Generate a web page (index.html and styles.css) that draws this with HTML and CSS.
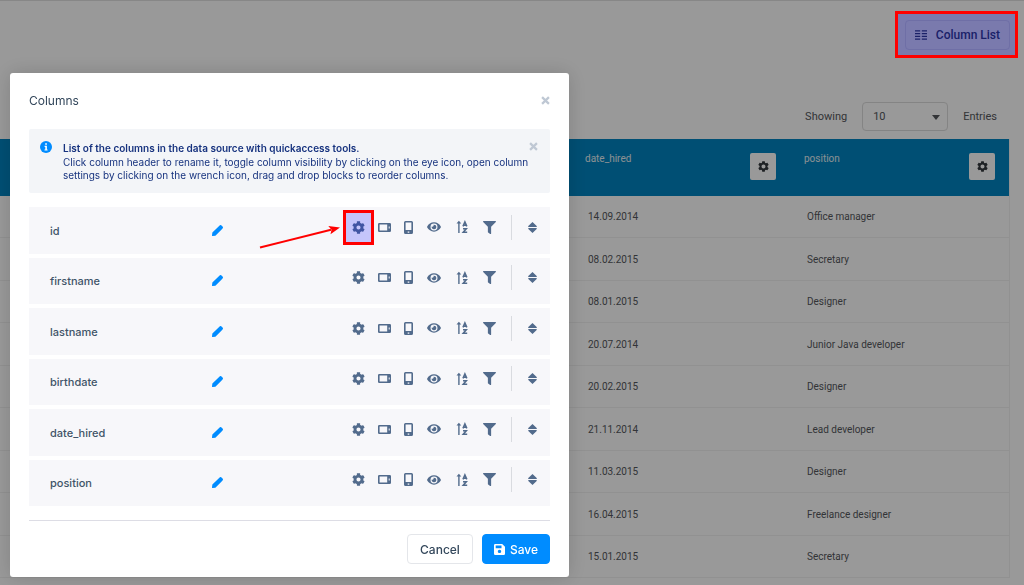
FILE: index.html
```html
<!DOCTYPE html>
<html lang="en">
<head>
<meta charset="utf-8">
<title>Columns</title>
<link rel="stylesheet" href="styles.css">
</head>
<body>
<svg class="sprite" aria-hidden="true">
  <symbol id="cog" viewBox="0 0 512 512"><path d="M487.4 315.7l-42.6-24.6c4.3-23.2 4.3-47 0-70.2l42.6-24.6c4.9-2.8 7.1-8.6 5.5-14-11.1-35.6-30-67.8-54.7-94.6-3.8-4.1-10-5.1-14.8-2.3L380.8 110c-17.9-15.4-38.5-27.3-60.8-35.1V25.8c0-5.6-3.9-10.5-9.4-11.7-36.7-8.2-74.3-7.8-109.2 0-5.5 1.2-9.4 6.1-9.4 11.7V75c-22.2 7.9-42.8 19.8-60.8 35.1L88.7 85.5c-4.9-2.8-11-1.9-14.8 2.3-24.7 26.7-43.6 58.9-54.7 94.6-1.7 5.4.6 11.2 5.5 14L67.3 221c-4.3 23.2-4.3 47 0 70.2l-42.6 24.6c-4.9 2.8-7.1 8.6-5.5 14 11.1 35.6 30 67.8 54.7 94.6 3.8 4.1 10 5.1 14.8 2.3l42.6-24.6c17.9 15.4 38.5 27.3 60.8 35.1v49.2c0 5.6 3.9 10.5 9.4 11.7 36.7 8.2 74.3 7.8 109.2 0 5.5-1.2 9.4-6.1 9.4-11.7v-49.2c22.2-7.9 42.8-19.8 60.8-35.1l42.6 24.6c4.9 2.8 11 1.9 14.8-2.3 24.7-26.7 43.6-58.9 54.7-94.6 1.5-5.5-.7-11.3-5.6-14.1zM256 336c-44.1 0-80-35.9-80-80s35.9-80 80-80 80 35.9 80 80-35.9 80-80 80z"/></symbol>
  <symbol id="settings" viewBox="2 2 20 20"><path d="M19.14 12.94c.04-.3.06-.61.06-.94 0-.32-.02-.64-.07-.94l2.03-1.58c.18-.14.23-.41.12-.61l-1.92-3.32c-.12-.22-.37-.29-.59-.22l-2.39.96c-.5-.38-1.03-.7-1.62-.94l-.36-2.54c-.04-.24-.24-.41-.48-.41h-3.84c-.24 0-.43.17-.47.41l-.36 2.54c-.59.24-1.13.57-1.62.94l-2.39-.96c-.22-.08-.47 0-.59.22L2.74 8.87c-.12.21-.08.47.12.61l2.03 1.58c-.05.3-.09.63-.09.94s.02.64.07.94l-2.03 1.58c-.18.14-.23.41-.12.61l1.92 3.32c.12.22.37.29.59.22l2.39-.96c.5.38 1.03.7 1.62.94l.36 2.54c.05.24.24.41.48.41h3.84c.24 0 .44-.17.47-.41l.36-2.54c.59-.24 1.13-.56 1.62-.94l2.39.96c.22.08.47 0 .59-.22l1.92-3.32c.12-.22.07-.47-.12-.61l-2.01-1.58zM12 15.6c-1.98 0-3.6-1.62-3.6-3.6s1.62-3.6 3.6-3.6 3.6 1.62 3.6 3.6-1.62 3.6-3.6 3.6z"/></symbol>
  <symbol id="tablet" viewBox="0 0 13 9"><path fill-rule="evenodd" d="M1.300 0h10.400A1.300 1.300 0 0 1 13 1.300v6.400A1.300 1.300 0 0 1 11.700 9H1.300A1.300 1.300 0 0 1 0 7.700V1.300A1.300 1.300 0 0 1 1.300 0zM1.600 1.600v5.800h7.600V1.600zM10.700 3.600v1.800h1V3.600z"/></symbol>
  <symbol id="phone" viewBox="0 0 9 13"><path fill-rule="evenodd" d="M1.500 0h6A1.500 1.500 0 0 1 9 1.500v10A1.500 1.500 0 0 1 7.500 13h-6A1.500 1.500 0 0 1 0 11.500v-10A1.500 1.500 0 0 1 1.500 0zM1.600 1.600v7.400h5.800V1.600zM3.700 10.600v1.100h1.600v-1.100z"/></symbol>
  <symbol id="eye" viewBox="0 50 576 412"><path d="M572.52 241.4C518.29 135.59 410.93 64 288 64S57.68 135.64 3.48 241.41a32.35 32.35 0 0 0 0 29.19C57.71 376.41 165.07 448 288 448s230.32-71.64 284.52-177.41a32.35 32.35 0 0 0 0-29.19zM288 400a144 144 0 1 1 144-144 143.93 143.93 0 0 1-144 144zm0-240a95.31 95.31 0 0 0-25.31 3.79 47.85 47.85 0 0 1-66.9 66.9A95.78 95.78 0 1 0 288 160z"/></symbol>
  <symbol id="order" viewBox="0 0 12 14"><path d="M2.200 13V3.500H.5L2.900.8l2.400 2.700H3.600V13z"/><path fill="none" stroke="currentColor" stroke-width="1.600" d="M7 6.400L8.900 2l1.900 4.400M7.700 5.200h2.400M7 8.800h3.300L7.300 12.200h3.900"/></symbol>
  <symbol id="filter" viewBox="0 0 512 512"><path d="M487.976 0H24.028C2.71 0-8.047 25.866 7.058 40.971L192 225.941V432c0 7.831 3.821 15.17 10.237 19.662l80 55.98C298.02 518.69 320 507.493 320 487.98V225.941l184.947-184.97C520.021 25.896 509.338 0 487.976 0z"/></symbol>
  <symbol id="move" viewBox="0 0 8 10"><path d="M4 0l3.800 3.600c.3.400.1.900-.4.900H.6c-.5 0-.7-.5-.4-.9zM4 10l3.800-3.600c.3-.4.1-.9-.4-.9H.6c-.5 0-.7.5-.4.9z"/></symbol>
  <symbol id="pencil" viewBox="0 0 12 12"><path d="M.6 12a.6.6 0 0 1-.6-.6l.4-3.100L7.200 1.500 8.300.5a1.500 1.500 0 0 1 2.100 0l1.100 1.100a1.500 1.500 0 0 1 0 2.100l-1 1.100-6.800 6.800z"/></symbol>
  <symbol id="close" viewBox="0 0 10 10"><path fill="none" stroke="currentColor" stroke-width="2.500" d="M1.200 1.200l7.600 7.600M8.800 1.200L1.200 8.800"/></symbol>
</svg>

<main class="page">
  <div class="toolbar">
    <div class="spot">
      <button class="column-list" type="button">
        <svg width="12" height="10" viewBox="0 0 12 10"><path fill="none" stroke="currentColor" stroke-width="1.200" d="M0 .8h5.200M0 3.600h5.200M0 6.400h5.200M0 9.200h5.200M6.800.8H12M6.800 3.600H12M6.800 6.400H12M6.800 9.200H12"/></svg>
        Column List
      </button>
      <span class="marker"></span>
    </div>
  </div>
  <div class="length">
    <label for="entries">Showing</label>
    <span class="select"><select id="entries"><option>10</option></select><svg width="8" height="5" viewBox="0 0 8 5"><path d="M0 0h8L4 5z"/></svg></span>
    <span>Entries</span>
  </div>
  <table class="data">
    <colgroup><col><col class="field"><col class="field"></colgroup>
    <thead>
      <tr>
        <td></td>
        <th><div class="head">date_hired<button type="button" aria-label="Settings"><svg class="i11"><use href="#settings"/></svg></button></div></th>
        <th><div class="head">position<button type="button" aria-label="Settings"><svg class="i11"><use href="#settings"/></svg></button></div></th>
      </tr>
    </thead>
    <tbody>
      <tr><td></td><td>14.09.2014</td><td>Office manager</td></tr>
      <tr><td></td><td>08.02.2015</td><td>Secretary</td></tr>
      <tr><td></td><td>08.01.2015</td><td>Designer</td></tr>
      <tr><td></td><td>20.07.2014</td><td>Junior Java developer</td></tr>
      <tr><td></td><td>20.02.2015</td><td>Designer</td></tr>
      <tr><td></td><td>21.11.2014</td><td>Lead developer</td></tr>
      <tr><td></td><td>11.03.2015</td><td>Designer</td></tr>
      <tr><td></td><td>16.04.2015</td><td>Freelance designer</td></tr>
      <tr><td></td><td>15.01.2015</td><td>Secretary</td></tr>
    </tbody>
  </table>
</main>

<div class="backdrop"></div>

<section class="modal" role="dialog" aria-labelledby="title">
  <header class="modal-head">
    <h1 id="title">Columns</h1>
    <button class="close" type="button" aria-label="Close"><svg class="i9"><use href="#close"/></svg></button>
  </header>
  <div class="notice">
    <svg class="info" width="12" height="12" viewBox="0 0 12 12"><circle cx="6" cy="6" r="6" fill="#008cff"/><path fill="#fff" d="M5.200 2.200h1.700v1.600H5.200zM4.600 4.800h2.300v3.600h.7v1.200H4.500V8.400h.8V6h-.7z"/></svg>
    <div class="notice-text">
      <strong>List of the columns in the data source with quickaccess tools.</strong>
      <p>Click column header to rename it, toggle column visibility by clicking on the eye icon, open column settings by clicking on the wrench icon, drag and drop blocks to reorder columns.</p>
    </div>
    <button class="close" type="button" aria-label="Dismiss"><svg class="i9"><use href="#close"/></svg></button>
  </div>
  <ul class="columns">
    <li>
      <span class="name">id</span><button class="edit" type="button" aria-label="Rename"><svg class="i11"><use href="#pencil"/></svg></button>
      <div class="tools"><button type="button" class="spot" aria-label="Settings"><svg class="i13"><use href="#cog"/></svg><span class="marker"></span></button><button type="button" aria-label="Tablet"><svg class="tab"><use href="#tablet"/></svg></button><button type="button" aria-label="Mobile"><svg class="mob"><use href="#phone"/></svg></button><button type="button" aria-label="Visibility"><svg class="see"><use href="#eye"/></svg></button><button type="button" aria-label="Sorting"><svg class="ord"><use href="#order"/></svg></button><button type="button" aria-label="Filter"><svg class="i13"><use href="#filter"/></svg></button><i class="rule"></i><button type="button" aria-label="Reorder"><svg class="mov"><use href="#move"/></svg></button></div>
      <svg class="arrow" width="84" height="26" viewBox="0 0 84 26"><path stroke="#f00" stroke-width="2" d="M1 22.500L72 4.800"/><path fill="#f00" d="M81 2.500L71.500 9.200l1-4.500-3.200-3.600z"/></svg>
    </li>
    <li>
      <span class="name">firstname</span><button class="edit" type="button" aria-label="Rename"><svg class="i11"><use href="#pencil"/></svg></button>
      <div class="tools"><button type="button" aria-label="Settings"><svg class="i13"><use href="#cog"/></svg></button><button type="button" aria-label="Tablet"><svg class="tab"><use href="#tablet"/></svg></button><button type="button" aria-label="Mobile"><svg class="mob"><use href="#phone"/></svg></button><button type="button" aria-label="Visibility"><svg class="see"><use href="#eye"/></svg></button><button type="button" aria-label="Sorting"><svg class="ord"><use href="#order"/></svg></button><button type="button" aria-label="Filter"><svg class="i13"><use href="#filter"/></svg></button><i class="rule"></i><button type="button" aria-label="Reorder"><svg class="mov"><use href="#move"/></svg></button></div>
    </li>
    <li>
      <span class="name">lastname</span><button class="edit" type="button" aria-label="Rename"><svg class="i11"><use href="#pencil"/></svg></button>
      <div class="tools"><button type="button" aria-label="Settings"><svg class="i13"><use href="#cog"/></svg></button><button type="button" aria-label="Tablet"><svg class="tab"><use href="#tablet"/></svg></button><button type="button" aria-label="Mobile"><svg class="mob"><use href="#phone"/></svg></button><button type="button" aria-label="Visibility"><svg class="see"><use href="#eye"/></svg></button><button type="button" aria-label="Sorting"><svg class="ord"><use href="#order"/></svg></button><button type="button" aria-label="Filter"><svg class="i13"><use href="#filter"/></svg></button><i class="rule"></i><button type="button" aria-label="Reorder"><svg class="mov"><use href="#move"/></svg></button></div>
    </li>
    <li>
      <span class="name">birthdate</span><button class="edit" type="button" aria-label="Rename"><svg class="i11"><use href="#pencil"/></svg></button>
      <div class="tools"><button type="button" aria-label="Settings"><svg class="i13"><use href="#cog"/></svg></button><button type="button" aria-label="Tablet"><svg class="tab"><use href="#tablet"/></svg></button><button type="button" aria-label="Mobile"><svg class="mob"><use href="#phone"/></svg></button><button type="button" aria-label="Visibility"><svg class="see"><use href="#eye"/></svg></button><button type="button" aria-label="Sorting"><svg class="ord"><use href="#order"/></svg></button><button type="button" aria-label="Filter"><svg class="i13"><use href="#filter"/></svg></button><i class="rule"></i><button type="button" aria-label="Reorder"><svg class="mov"><use href="#move"/></svg></button></div>
    </li>
    <li>
      <span class="name">date_hired</span><button class="edit" type="button" aria-label="Rename"><svg class="i11"><use href="#pencil"/></svg></button>
      <div class="tools"><button type="button" aria-label="Settings"><svg class="i13"><use href="#cog"/></svg></button><button type="button" aria-label="Tablet"><svg class="tab"><use href="#tablet"/></svg></button><button type="button" aria-label="Mobile"><svg class="mob"><use href="#phone"/></svg></button><button type="button" aria-label="Visibility"><svg class="see"><use href="#eye"/></svg></button><button type="button" aria-label="Sorting"><svg class="ord"><use href="#order"/></svg></button><button type="button" aria-label="Filter"><svg class="i13"><use href="#filter"/></svg></button><i class="rule"></i><button type="button" aria-label="Reorder"><svg class="mov"><use href="#move"/></svg></button></div>
    </li>
    <li>
      <span class="name">position</span><button class="edit" type="button" aria-label="Rename"><svg class="i11"><use href="#pencil"/></svg></button>
      <div class="tools"><button type="button" aria-label="Settings"><svg class="i13"><use href="#cog"/></svg></button><button type="button" aria-label="Tablet"><svg class="tab"><use href="#tablet"/></svg></button><button type="button" aria-label="Mobile"><svg class="mob"><use href="#phone"/></svg></button><button type="button" aria-label="Visibility"><svg class="see"><use href="#eye"/></svg></button><button type="button" aria-label="Sorting"><svg class="ord"><use href="#order"/></svg></button><button type="button" aria-label="Filter"><svg class="i13"><use href="#filter"/></svg></button><i class="rule"></i><button type="button" aria-label="Reorder"><svg class="mov"><use href="#move"/></svg></button></div>
    </li>
  </ul>
  <footer class="modal-foot">
    <button class="btn" type="button">Cancel</button>
    <button class="btn primary" type="button"><svg width="11" height="11" viewBox="0 0 11 11"><path fill="#fff" fill-rule="evenodd" d="M1.200 0h7L11 2.800v7A1.200 1.200 0 0 1 9.800 11H1.200A1.200 1.200 0 0 1 0 9.800V1.200A1.200 1.200 0 0 1 1.200 0zM1.700 1.600v2.600h5.800V1.600zM5.500 5.700a1.700 1.700 0 1 0 .01 0z"/></svg>Save</button>
  </footer>
</section>
</body>
</html>
```
FILE: styles.css
```css
* { box-sizing: border-box; }
body {
  margin: 0;
  background: #fff;
  color: #33475b;
  font-family: Inter, "Liberation Sans", sans-serif;
  font-size: 11px;
}
button { margin: 0; padding: 0; border: 0; background: none; color: inherit; font: inherit; }
svg { display: block; fill: currentColor; flex: none; }
.sprite { position: absolute; width: 0; height: 0; }
.i9 { width: 9px; height: 9px; }
.i11 { width: 11px; height: 11px; }
.i13 { width: 13px; height: 13px; }
.tab { width: 13px; height: 9px; }
.mob { width: 9px; height: 13px; }
.see { width: 14px; height: 10px; }
.ord { width: 12px; height: 14px; }
.mov { width: 9px; height: 11px; }

.page { border-top: 1px solid #e2e2e2; font-family: Roboto, sans-serif; color: #55585c; }
.toolbar { display: flex; justify-content: flex-end; padding: 19px 14px 0 0; }
.spot { position: relative; }
.marker {
  position: absolute;
  inset: -9px -8px -8px -10px;
  z-index: 3;
  border: 3px solid #f00;
  background: rgba(0, 0, 255, .2);
}
.column-list {
  display: flex;
  align-items: center;
  gap: 9px;
  height: 30px;
  padding: 0 9px;
  border: 1px solid #e8e8f0;
  border-radius: 4px;
  color: #3a4670;
  font-size: 12px;
  font-weight: 500;
}
.length { display: flex; justify-content: flex-end; align-items: center; gap: 15px; padding: 52px 27px 8px 0; }
.select { position: relative; }
.select select {
  display: block;
  appearance: none;
  width: 86px;
  height: 29px;
  padding: 0 10px;
  border: 1px solid #dcdcdc;
  border-radius: 4px;
  background: transparent;
  color: inherit;
  font: inherit;
}
.select svg { position: absolute; right: 8px; top: 13px; }

.data { width: calc(100% - 14px); border-collapse: separate; border-spacing: 0; table-layout: fixed; border-right: 1px solid #f2f2f2; font-size: 10px; }
.field { width: 219px; }
.data td, .data th { padding: 0; font-weight: 400; text-align: left; }
.data thead td, .data thead th { height: 57px; background: #0084c1; color: #e6f0f5; vertical-align: top; }
.head { display: flex; justify-content: space-between; padding: 14px 14px 0; line-height: 11px; }
.head button { display: grid; place-items: center; width: 26px; height: 27px; border-radius: 2px; background: #fff; color: #33383d; }
.data tbody td { height: 42px; padding-left: 17px; border-bottom: 1px solid #f2f2f2; }
.data tbody tr:nth-child(even) td { height: 43px; }

.backdrop { position: fixed; inset: 0; z-index: 1; background: rgba(0, 0, 0, .4); }

.modal {
  position: fixed;
  top: 73px;
  left: 10px;
  z-index: 2;
  width: min(559px, calc(100% - 20px));
  padding: 19px 19px 13px;
  border-radius: 3px;
  background: #fff;
  box-shadow: 0 0 20px rgba(0, 0, 0, .16);
}
.modal-head { display: flex; justify-content: space-between; align-items: center; }
.modal-head h1 { margin: 0; font-size: 12px; font-weight: 400; line-height: 17px; }
.close { color: #bfc8d4; }
.notice {
  display: flex;
  align-items: flex-start;
  margin-top: 20px;
  padding: 12px 12px 11px 11px;
  border-radius: 2px;
  background: #f3f5f8;
  color: #17337f;
  font-size: 10px;
  line-height: 13px;
}
.info { margin-right: 11px; }
.notice-text { flex: 1; }
.notice-text strong { display: block; font-weight: 600; line-height: 15px; }
.notice-text p { margin: 0 -16px 0 0; font-weight: 400; }
.notice .close { padding-top: 1px; }

.columns { display: grid; grid-auto-rows: 1fr; gap: 4px; min-height: 299px; margin: 14px 0; padding: 0; list-style: none; }
.columns li { position: relative; display: flex; align-items: center; padding: 0 5px 0 21px; background: #f7f7fa; }
.name { width: 162px; padding-top: 1px; font-weight: 500; color: #3f5468; }
.edit { color: #008cff; }
.tools {
  display: grid;
  grid-template-columns: 26px 26px 22px 30px 26px 28px 16px 26px;
  place-items: center;
  height: 40px;
  margin-left: auto;
  align-self: flex-start;
  color: #526b8c;
}
.rule { width: 1px; height: 25px; background: #d9dbe0; }
.tools .marker { inset: -11px -9px; }
.arrow { position: absolute; left: 230px; top: 18px; }

.modal-foot { display: flex; justify-content: flex-end; gap: 9px; padding-top: 13px; border-top: 1px solid #dddde5; }
.btn {
  display: flex;
  align-items: center;
  gap: 6px;
  height: 30px;
  padding: 0 12px;
  border: 1px solid #e4e6ea;
  border-radius: 4px;
  font-size: 12px;
  font-weight: 500;
}
.primary { gap: 5px; padding: 0 11px; border-color: #008cff; background: #008cff; color: #fff; }
```
